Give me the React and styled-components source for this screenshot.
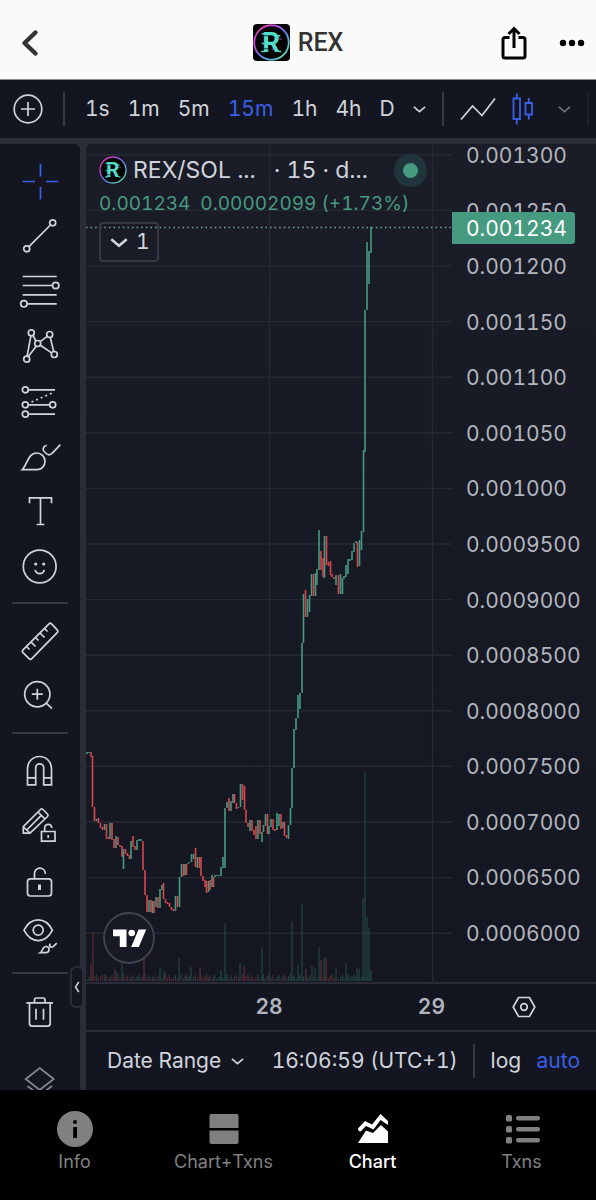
import React, { useState } from "react";
import styled, { createGlobalStyle } from "styled-components";

const GlobalStyle = createGlobalStyle`
    body {
        margin: 0;
        background: #000000;
        font-family: Inter, "Liberation Sans", sans-serif;
    }

    * {
        box-sizing: border-box;
    }

    button {
        margin: 0;
        padding: 0;
        border: none;
        background: none;
        color: inherit;
        font: inherit;
        font-variant-numeric: inherit;
        cursor: pointer;
    }

    svg {
        display: block;
        flex-shrink: 0;
    }
`;

const Page = styled.div`
    display: flex;
    flex-direction: column;
    height: 100vh;
    background: #2a2c37;
    color: #d1d4dc;
    font-size: 21px;
    font-variant-numeric: tabular-nums;
    line-height: 24px;
`;

const Header = styled.header`
    display: grid;
    grid-template-columns: 1fr auto 1fr;
    align-items: center;
    height: 80px;
    padding: 6px 11px 0;
    background: #fafafa;
    border-bottom: 1px solid #8a8b90;
    color: #333333;
    flex-shrink: 0;
`;

const BackButton = styled.button`
    justify-self: start;
    padding-left: 9px;
`;

const HeaderTitle = styled.h1`
    display: flex;
    align-items: center;
    gap: 8px;
    margin: 0;
    font-family: Roboto, sans-serif;
    font-size: 25px;
    font-weight: 500;
`;

const HeaderActions = styled.div`
    display: flex;
    justify-content: flex-end;
    gap: 31px;
    color: #000000;
`;

const Toolbar = styled.div`
    display: flex;
    align-items: center;
    gap: 16px;
    height: 58px;
    padding-left: 13px;
    background: #131620;
    overflow: hidden;
    flex-shrink: 0;
`;

const ToolbarGroup = styled.div`
    display: flex;
    align-items: center;
    gap: ${props => props.$gap}px;
    padding-right: ${props => props.$end || 0}px;
`;

const Divider = styled.div`
    width: 2px;
    height: 34px;
    background: ${props => (props.$dim ? "#1d202b" : "#363943")};
    flex-shrink: 0;
`;

const TextButton = styled.button`
    color: ${props => (props.$active ? "#3b5fe6" : "#d1d4dc")};
    white-space: nowrap;
`;

const Workspace = styled.div`
    position: relative;
    display: flex;
    flex: 1;
    gap: 6px;
    min-height: 0;
    padding-top: 6px;
`;

const Sidebar = styled.aside`
    display: flex;
    flex-direction: column;
    align-items: center;
    width: 80px;
    padding-top: 9px;
    background: #131620;
    border-top-right-radius: 6px;
    overflow: hidden;
    flex-shrink: 0;
`;

const ToolButton = styled.button`
    display: flex;
    justify-content: center;
    align-items: center;
    width: 80px;
    height: 55px;
    color: ${props => (props.$active ? "#3b5fe6" : "#d1d4dc")};
    opacity: ${props => (props.$faded ? 0.6 : 1)};
    flex-shrink: 0;
`;

const ToolDivider = styled.div`
    width: 56px;
    height: 2px;
    margin: 9px 0;
    background: #363943;
    flex-shrink: 0;
`;

const ToolGap = styled.div`
    height: 13px;
    flex-shrink: 0;
`;

const CollapseHandle = styled.button`
    position: absolute;
    left: 70px;
    bottom: 82px;
    display: flex;
    justify-content: center;
    align-items: center;
    width: 14px;
    height: 42px;
    background: #131620;
    border: 2px solid #2a2c37;
    border-radius: 6px;
`;

const ChartPanel = styled.main`
    display: flex;
    flex-direction: column;
    flex: 1;
    min-width: 0;
    background: #131620;
    border-top-left-radius: 6px;
    overflow: hidden;
`;

const ChartArea = styled.div`
    display: flex;
    flex: 1;
    min-height: 0;
    background: linear-gradient(#1a1c27, #141721);
`;

const Plot = styled.div`
    position: relative;
    flex: 1;
    min-width: 0;
`;

const PlotSvg = styled.svg`
    width: 100%;
    height: 100%;
`;

const Legend = styled.div`
    position: absolute;
    top: 9px;
    left: 13px;
    right: 25px;
`;

const LegendTitle = styled.div`
    display: flex;
    align-items: center;
    gap: 6px;
    height: 34px;
    font-size: 23px;
    white-space: nowrap;
`;

const LegendInterval = styled.span`
    margin-left: 12px;
`;

const LiveDot = styled.span`
    width: 33px;
    height: 33px;
    margin-left: auto;
    border: 9px solid #20353b;
    border-radius: 50%;
    background: #459a80;
`;

const LegendValues = styled.div`
    display: flex;
    gap: 10px;
    margin-top: 5px;
    color: #459a80;
    font-size: 19px;
    white-space: nowrap;
`;

const LegendToggle = styled.button`
    display: flex;
    align-items: center;
    gap: 8px;
    height: 40px;
    margin-top: 6px;
    padding: 0 7px 0 9px;
    border: 2px solid #363943;
    border-radius: 4px;
`;

const ChartBadge = styled.a`
    position: absolute;
    left: 17px;
    bottom: 18px;
`;

const PriceScale = styled.div`
    position: relative;
    display: flex;
    flex-direction: column;
    justify-content: space-between;
    width: 144px;
    padding: 2px 0 38px 14px;
    color: #b2b5be;
    line-height: 20px;
    flex-shrink: 0;
`;

const PriceTag = styled.div`
    position: absolute;
    top: 68px;
    left: 0;
    width: 123px;
    padding: 1px 0 0 14px;
    background: #459a80;
    border-radius: 0 3px 3px 0;
    color: #ffffff;
    line-height: 31px;
`;

const TimeAxis = styled.div`
    display: flex;
    height: 50px;
    border-top: 2px solid #2a2c37;
    border-bottom: 2px solid #2a2c37;
    flex-shrink: 0;
`;

const DayLabels = styled.div`
    display: grid;
    grid-template-columns: 1fr auto 1fr;
    align-items: center;
    flex: 1;
    padding: 0 7px;
    color: #b2b5be;
    font-weight: 600;
`;

const DayLabel = styled.span`
    grid-column: ${props => props.$column};
    justify-self: end;
`;

const AxisSettings = styled.button`
    display: flex;
    justify-content: center;
    align-items: center;
    width: 144px;
`;

const BottomBar = styled.div`
    display: flex;
    align-items: center;
    justify-content: space-between;
    height: 58px;
    padding: 0 16px 0 21px;
    flex-shrink: 0;
`;

const RangeButton = styled(TextButton)`
    display: flex;
    align-items: center;
    gap: 10px;
    margin-right: 12px;
`;

const Nav = styled.nav`
    display: grid;
    grid-template-columns: repeat(4, 1fr);
    height: 110px;
    padding-top: 19px;
    background: #000000;
    flex-shrink: 0;
`;

const NavLink = styled.a`
    display: flex;
    flex-direction: column;
    align-items: center;
    gap: 1px;
    color: ${props => (props.$active ? "#ffffff" : "#808080")};
    font-size: 18px;
    font-weight: ${props => (props.$active ? 500 : 400)};
    text-decoration: none;
`;

const LogoLetter = styled.text`
    font-family: Roboto, sans-serif;
    font-size: 27px;
    font-weight: 700;
`;

const TokenLogo = ({ id, size, square }) => (
    <svg width={size} height={size} viewBox="0 0 36 36" aria-hidden="true">
        <defs>
            <linearGradient id={id} x1="0" y1="0" x2="1" y2="1">
                <stop offset="0" stopColor="#f03ca8" />
                <stop offset="0.35" stopColor="#b04ad8" />
                <stop offset="0.55" stopColor="#5a8cf0" />
                <stop offset="1" stopColor="#5cf0a0" />
            </linearGradient>
        </defs>
        {square ? (
            <rect width="36" height="36" rx="4" fill="#000000" />
        ) : (
            <circle cx="18" cy="18" r="18" fill="#000000" />
        )}
        <circle cx="18" cy="18" r="16.8" fill="none" stroke={`url(#${id})`} strokeWidth="1.8" />
        <LogoLetter x="9" y="27.6" fill="#4fdccb">R</LogoLetter>
        <path d="M8.500 9.500h4M24 11.500h2.500M8.500 19h2.500M8 26.800h4M25 26.800h2.500" stroke="#4fdccb" strokeWidth="1.4" />
        <path d="M25.500 14.500h2.500M18 24.500h2" stroke="#b04ad8" strokeWidth="1" />
        <path d="M9 11.400h6M9 24h7" stroke="#04181c" strokeWidth="0.7" />
    </svg>
);

const Chevron = ({ width = 13, color = "#d1d4dc", weight = 1.8 }) => (
    <svg width={width} height={width / 2} viewBox="0 0 14 7" fill="none" stroke={color} strokeWidth={weight} overflow="visible">
        <path d="M1 1l6 5 6-5" />
    </svg>
);

// every drawing tool icon sits on a 44px canvas
const toolIcons = {
    cross: <path d="M22.500 5v12.500M22.500 28v12.500M4.500 22.500H17M28 22.500h12.500" />,
    trend: (
        <>
            <circle cx="34.700" cy="8.800" r="3" />
            <circle cx="8.700" cy="34.800" r="3" />
            <path d="M32.500 11L10.900 32.600" />
        </>
    ),
    fib: (
        <>
            <path d="M4.700 7.500h34M4.700 16.500h29.700M4.700 25.800h34M9 34.800h29.700" />
            <circle cx="37.700" cy="16.500" r="3.200" />
            <circle cx="5.900" cy="34.800" r="3.200" />
        </>
    ),
    pattern: (
        <>
            <circle cx="13.300" cy="8.800" r="3" />
            <circle cx="31.700" cy="10.500" r="3" />
            <circle cx="19.700" cy="19.500" r="3" />
            <circle cx="8.700" cy="35.200" r="3" />
            <circle cx="36.300" cy="30.500" r="3" />
            <path d="M12.900 11.800L9.100 32.200M14.900 11.500l3.200 5.500M18.300 22.200L10.300 32.600M22.200 17.700l7-5.400M32.300 13.500l3.400 14.100M22.400 21.200l11.200 7.700" />
        </>
    ),
    forecast: (
        <>
            <circle cx="7.300" cy="10.800" r="3" />
            <circle cx="7.300" cy="25.800" r="3" />
            <circle cx="34.700" cy="25.800" r="3" />
            <circle cx="7.300" cy="35.200" r="3" />
            <path d="M10.300 10.800H37M10.300 25.800h21.400M10.300 35.200H37" />
            <path d="M13.500 23L35.500 13.500" strokeDasharray="2 3" />
        </>
    ),
    brush: (
        <>
            <path d="M4.300 35.600C9 31 10 19 18.700 19a8.300 8.300 0 0 1 8.300 8.300c0 5-3.500 8.300-8.300 8.300z" />
            <path d="M28.800 11.300c-2.400.6-3.600 2.200-3.600 4.400 0 1.200 4 5.200 5.600 5.200 1.500 0 2.700-.8 4-2.200l7.600-8" />
        </>
    ),
    type: <path d="M11.500 14.200V8.800h22v5.400M22.500 8.800v26.700M18.700 35.500h7.600" />,
    smile: (
        <>
            <circle cx="21.700" cy="22.500" r="16.400" />
            <circle cx="17.700" cy="20" r="1.600" fill="currentColor" stroke="none" />
            <circle cx="25.700" cy="20" r="1.600" fill="currentColor" stroke="none" />
            <path d="M17.200 25.800c1 5 8 5 9 0" />
        </>
    ),
    ruler: (
        <>
            <path d="M31 4.800L5 30.800q-1.400 1.400 0 2.800l6 6q1.400 1.400 2.800 0l25.400-26q1.400-1.400 0-2.800l-5.700-6q-1.300-1.300-2.500 0z" />
            <path d="M8.500 27.500l3 3M13 23l4.500 4.500M17.500 18.500l3 3M22 14l4.500 4.500M26.500 9.500l3 3" />
        </>
    ),
    zoom: (
        <>
            <circle cx="19.300" cy="20.200" r="12.600" />
            <path d="M28.300 29.200l5.700 5.500M13.800 20.200h11M19.300 14.700v11" />
        </>
    ),
    magnet: (
        <path d="M9.500 35.800V19.500a12 12 0 0 1 24 0v16.300h-7.800V18.800a4 4 0 0 0-8 0v17zM9.500 28.800h8.200M25.700 28.800h7.800" />
    ),
    pencilLock: (
        <>
            <path d="M5.300 29.200v-6.500L22.500 5.500q1.200-1.200 2.500 0l4.500 4.500q1.200 1.200 0 2.500L12 29.200zM5.500 23l6.300 6M20 8l6.800 6.800M8.800 26L23.500 11.200" />
            <path d="M23.500 27.500h13.500v9.700H23.500zM26.700 27.500v-3.700c0-4.500 7-4.500 7 .200M30.200 31v3" />
        </>
    ),
    lock: (
        <>
            <rect x="9.500" y="19.800" width="24" height="17.200" rx="3" />
            <path d="M16.500 19.800v-5.300c0-7 10.700-7.300 10.900.5" />
            <path d="M21.500 25.500v5.500" strokeWidth="3" />
        </>
    ),
    eyeBrush: (
        <>
            <path d="M6 16.200C13 2.500 27.500 2.500 34.400 16.200 27.500 30 13 30 6 16.200z" />
            <circle cx="20.200" cy="16.200" r="5" />
            <path d="M22.300 38.700c2.500-1.500 2-6.200 5.600-6.200 4.300 0 4.200 6.200-.2 6.200zM32.200 29.600c-1.800 3.200 1.200 4.300 3 3l3.600-3.400" />
        </>
    ),
    trash: (
        <path d="M8.300 13.800H35M16.500 13.800V11q0-2 2-2H25q2 0 2 2v2.800M11.500 13.800v20.400q0 3 3 3h14.700q3 0 3-3V13.800M18 19.800v11M25.500 19.800v11" />
    ),
    layers: <path d="M21.700 11l14 11-14 11-14-11zM9.500 29l12.200 9.500L34 29" />
};

const ToolIcon = ({ name }) => (
    <svg width="44" height="44" viewBox="0 0 44 44" fill="none" stroke="currentColor" strokeWidth="1.7">
        {toolIcons[name]}
    </svg>
);

const toolGroups = [
    [
        ["cross", "Cursor"],
        ["trend", "Trend line"],
        ["fib", "Fib retracement"],
        ["pattern", "Patterns"],
        ["forecast", "Forecasting"],
        ["brush", "Brush"],
        ["type", "Text"],
        ["smile", "Icons"]
    ],
    [
        ["ruler", "Measure"],
        ["zoom", "Zoom in"]
    ],
    [
        ["magnet", "Magnet mode"],
        ["pencilLock", "Stay in drawing mode"],
        ["lock", "Lock all drawings"],
        ["eyeBrush", "Hide all drawings"]
    ],
    [["trash", "Remove drawings"]]
];

const intervals = ["1s", "1m", "5m", "15m", "1h", "4h", "D"];

const prices = [
    "0.001300",
    "0.001250",
    "0.001200",
    "0.001150",
    "0.001100",
    "0.001050",
    "0.001000",
    "0.0009500",
    "0.0009000",
    "0.0008500",
    "0.0008000",
    "0.0007500",
    "0.0007000",
    "0.0006500",
    "0.0006000"
];

// [x, high, low, direction]
const candles = [
    [87, 752, 754, 1], [89, 752, 753, 1], [91, 752, 757, 0], [92.5, 756, 807, 0], [94.5, 807, 821, 0],
    [96.5, 819, 821, 1], [98.5, 818, 823, 0], [100.5, 823, 828, 0], [102.5, 827, 830, 0], [104.5, 824, 830, 1],
    [106.5, 824, 839, 0], [108.5, 837, 839, 0], [110, 823, 839, 1], [112, 823, 840, 0], [114, 839, 848, 0],
    [116, 836, 848, 1], [118, 837, 845, 0], [120, 845, 847, 0], [122, 846, 857, 0], [123.5, 849, 869, 1],
    [125.5, 849, 854, 0], [127.5, 853, 856, 0], [129.5, 855, 859, 0], [131, 841, 859, 1], [133, 836, 847, 0],
    [135, 846, 850, 0], [137, 840, 850, 1], [139, 839, 841, 1], [141, 839, 841, 1], [143, 841, 870, 0],
    [145, 870, 895, 0], [147, 895, 912, 0], [149, 900, 912, 1], [151, 900, 912, 0], [152.5, 901, 913, 1],
    [154, 901, 913, 0], [156, 897, 907, 1], [158, 897, 908, 0], [160, 889, 908, 1], [162, 885, 890, 1],
    [163.5, 883, 899, 0], [165.5, 899, 903, 0], [167.5, 902, 904, 0], [169.5, 903, 907, 0], [171.5, 907, 910, 0],
    [173.5, 909, 911, 0], [175.5, 896, 911, 1], [177.5, 896, 907, 0], [179.5, 877, 907, 1], [181.5, 864, 877, 1],
    [183.5, 864, 876, 0], [185, 864, 875, 1], [186.5, 864, 875, 0], [188, 863, 864, 1], [189.5, 862, 863, 1],
    [191.5, 854, 862, 1], [193.5, 854, 859, 1], [195.5, 848, 867, 0], [197.5, 857, 868, 1], [199.5, 857, 868, 0],
    [201, 857, 876, 0], [203, 876, 881, 0], [205, 880, 887, 0], [206.5, 881, 893, 0], [208.5, 881, 892, 1],
    [210, 880, 890, 0], [212, 875, 887, 1], [213.5, 877, 887, 0], [215, 875, 877, 1], [217, 875, 876, 1],
    [219, 875, 876, 1], [221, 867, 876, 1], [223, 857, 868, 1], [225, 808, 868, 1], [227, 802, 808, 1],
    [229, 798, 811, 0], [231, 801, 811, 1], [233, 794, 803, 1], [234.5, 794, 803, 0], [236.5, 803, 809, 0],
    [238.5, 807, 808, 1], [240.5, 784, 807, 1], [242.5, 784, 800, 0], [244.5, 786, 810, 0], [246, 810, 823, 0],
    [248, 823, 827, 0], [250, 820, 831, 1], [252, 820, 831, 0], [254, 830, 835, 0], [256, 826, 839, 0],
    [258, 820, 839, 1], [260, 820, 834, 0], [262, 832, 842, 1], [263.5, 825, 832, 1], [265.5, 814, 826, 1],
    [267.5, 814, 834, 0], [269, 826, 834, 1], [271, 819, 827, 1], [273, 819, 830, 0], [275, 829, 831, 0],
    [277, 813, 830, 1], [279, 814, 826, 1], [281, 814, 829, 0], [283, 822, 828, 1], [284.5, 822, 836, 0],
    [286.5, 835, 838, 0], [288.5, 825, 839, 1], [290.5, 808, 825, 1], [292, 768, 808, 1], [294, 729, 768, 1],
    [296, 718, 730, 1], [298, 695, 718, 1], [300, 693, 709, 1], [302, 643, 693, 1], [303.5, 594, 643, 1],
    [305.5, 590, 617, 0], [307.5, 599, 617, 1], [309.5, 595, 612, 1], [311.5, 574, 596, 1], [313.5, 574, 596, 0],
    [315.5, 573, 596, 1], [317, 569, 585, 1], [319, 530, 570, 1], [321, 551, 570, 0], [323, 558, 577, 0],
    [324.5, 536, 578, 1], [326.5, 536, 565, 0], [328.5, 562, 566, 0], [330.5, 561, 575, 0], [332, 574, 577, 0],
    [334, 577, 579, 0], [336, 575, 585, 1], [338.5, 575, 594, 0], [340.5, 574, 594, 1], [342.5, 578, 594, 1],
    [344, 576, 579, 1], [346, 565, 577, 1], [348, 559, 574, 1], [350, 559, 561, 1], [352, 551, 560, 1],
    [354, 543, 552, 1], [356, 541, 543, 1], [357.5, 542, 567, 0], [359.5, 540, 566, 1], [361.5, 531, 550, 1],
    [363.5, 450, 532, 1], [365, 310, 452, 1], [367, 242, 310, 1], [369, 251, 284, 1], [371, 227, 253, 1]
];

// volume peaks by x, everything between them is low
const volumes = [
    [91, 18, 0], [93, 49, 0], [105, 7, 1], [115, 12, 0], [117, 9, 1], [122, 22, 1], [144, 24, 0], [160, 13, 1],
    [164, 10, 1], [179, 23, 1], [191, 14, 1], [200, 14, 0], [221, 11, 1], [225, 58, 1], [240, 18, 1],
    [244, 15, 0], [262, 33, 1], [292, 60, 1], [298, 16, 1], [302, 77, 1], [306, 12, 0], [312, 15, 1],
    [315, 13, 1], [319, 34, 1], [321, 21, 0], [324, 23, 1], [326, 24, 0], [336, 13, 1], [346, 18, 1],
    [357, 13, 1], [359, 12, 1], [363, 83, 1], [365, 209, 1], [367, 64, 1], [369, 53, 1], [371, 11, 1]
];

const Candles = () => (
    <PlotSvg viewBox="86 144 366 838" preserveAspectRatio="none">
        <g stroke="#262933" strokeWidth="1.4">
            {prices.map((price, i) => (
                <path key={price} d={`M86 ${154.8 + i * 55.6}H452`} />
            ))}
            <path d="M269.500 144V982M432.500 144V982" />
        </g>
        {candles.map(([x, , , up], i) => (
            <rect
                key={x}
                x={x - 0.7}
                y={981 - (2 + ((i * 37) % 11) / 2)}
                width="1.3"
                height={2 + ((i * 37) % 11) / 2}
                fill={up ? "#23403f" : "#4b2830"}
            />
        ))}
        {volumes.map(([x, height, up]) => (
            <rect key={x} x={x - 0.8} y={981 - height} width="1.6" height={height} fill={up ? "#203a3c" : "#4b2830"} />
        ))}
        {candles.map(([x, high, low, up]) => (
            <rect key={x} x={x - 0.8} y={high} width="1.6" height={low - high} fill={up ? "#459a80" : "#d8474e"} />
        ))}
        <path d="M86 227.500H452" stroke="#75a89a" strokeWidth="1.3" strokeDasharray="1.5 3.1" />
    </PlotSvg>
);

const App = () => {
    const [interval, setActiveInterval] = useState("15m");
    const [tool, setTool] = useState("cross");
    const [tab, setTab] = useState("chart");

    const openTab = name => e => {
        e.preventDefault();
        setTab(name);
    };

    return (
        <>
            <GlobalStyle />
            <Page>
                <Header>
                    <BackButton aria-label="Back">
                        <svg width="20" height="30" viewBox="0 0 20 30" fill="none" stroke="#333333" strokeWidth="4.4" strokeLinecap="round" strokeLinejoin="round">
                            <path d="M15.500 4.500L4.500 15l11 10.500" />
                        </svg>
                    </BackButton>
                    <HeaderTitle>
                        <TokenLogo id="ring-header" size={37} square />
                        REX
                    </HeaderTitle>
                    <HeaderActions>
                        <button aria-label="Share">
                            <svg width="28" height="36" viewBox="0 0 28 36" fill="none" stroke="#000000" strokeWidth="3">
                                <path d="M9.500 12.500H5q-2 0-2 2V31q0 2 2 2h18q2 0 2-2V14.500q0-2-2-2h-4.500" />
                                <path d="M14 23V4M8.500 9L14 3.500 19.500 9" />
                            </svg>
                        </button>
                        <button aria-label="More">
                            <svg width="26" height="36" viewBox="0 0 26 36">
                                <circle cx="4" cy="18" r="3.200" />
                                <circle cx="13" cy="18" r="3.200" />
                                <circle cx="22" cy="18" r="3.200" />
                            </svg>
                        </button>
                    </HeaderActions>
                </Header>

                <Toolbar>
                    <ToolbarGroup $gap={20} $end={4}>
                        <button aria-label="Add symbol">
                            <svg width="30" height="30" viewBox="0 0 30 30" fill="none" stroke="#d1d4dc" strokeWidth="1.700">
                                <circle cx="15" cy="15" r="13.800" />
                                <path d="M15 8v14M8 15h14" />
                            </svg>
                        </button>
                        <Divider />
                    </ToolbarGroup>
                    <ToolbarGroup $gap={18}>
                        {intervals.map(item => (
                            <TextButton
                                key={item}
                                $active={item === interval}
                                onClick={() => setActiveInterval(item)}
                            >
                                {item}
                            </TextButton>
                        ))}
                        <button aria-label="More intervals">
                            <Chevron />
                        </button>
                    </ToolbarGroup>
                    <ToolbarGroup $gap={16} $end={8}>
                        <Divider />
                        <button aria-label="Line">
                            <svg width="36" height="26" viewBox="0 0 36 26" fill="none" stroke="#d1d4dc" strokeWidth="1.700">
                                <path d="M1 23.500L12.500 10l9.500 9.500L35 2.500" />
                            </svg>
                        </button>
                        <button aria-label="Candles">
                            <svg width="22" height="32" viewBox="0 0 22 32" fill="none" stroke="#3b5fe6" strokeWidth="1.800">
                                <path d="M1.500 5.500h6.500v20.500H1.500zM4.800 0.500v5M4.800 26v5.500M13.500 10h6.500v11.500h-6.500zM16.800 5v5M16.800 21.500v5" />
                            </svg>
                        </button>
                    </ToolbarGroup>
                    <ToolbarGroup $gap={16}>
                        <button aria-label="Chart type">
                            <Chevron color="#6e727d" />
                        </button>
                        <Divider $dim />
                    </ToolbarGroup>
                </Toolbar>

                <Workspace>
                    <Sidebar>
                        {toolGroups.map((group, i) => (
                            <React.Fragment key={i}>
                                {i > 0 && <ToolDivider />}
                                {group.map(([name, label]) => (
                                    <ToolButton
                                        key={name}
                                        aria-label={label}
                                        $active={tool === name}
                                        onClick={() => setTool(name)}
                                    >
                                        <ToolIcon name={name} />
                                    </ToolButton>
                                ))}
                            </React.Fragment>
                        ))}
                        <ToolGap />
                        <ToolButton aria-label="Object tree" $faded>
                            <ToolIcon name="layers" />
                        </ToolButton>
                    </Sidebar>

                    <ChartPanel>
                        <ChartArea>
                            <Plot>
                                <Candles />
                                <Legend>
                                    <LegendTitle>
                                        <TokenLogo id="ring-legend" size={28} />
                                        <span>REX/SOL ...</span>
                                        <LegendInterval>· 15 · d...</LegendInterval>
                                        <LiveDot />
                                    </LegendTitle>
                                    <LegendValues>
                                        <span>0.001234</span>
                                        <span>0.00002099 (+1.73%)</span>
                                    </LegendValues>
                                    <LegendToggle>
                                        <Chevron width={18} weight={2} />
                                        1
                                    </LegendToggle>
                                </Legend>
                                <ChartBadge href="#tradingview" aria-label="TradingView">
                                    <svg width="52" height="52" viewBox="0 0 52 52">
                                        <circle cx="26" cy="26" r="25" fill="#171a24" stroke="#434651" strokeWidth="1.800" />
                                        <path d="M10 17.500h13.500V35h-6.700V24.300H10zM35.500 17.500H43.200L35.800 35h-7.600z" fill="#ffffff" />
                                        <circle cx="28.700" cy="21" r="3.300" fill="#ffffff" />
                                    </svg>
                                </ChartBadge>
                            </Plot>
                            <PriceScale>
                                {prices.map(price => (
                                    <span key={price}>{price}</span>
                                ))}
                                <PriceTag>0.001234</PriceTag>
                            </PriceScale>
                        </ChartArea>

                        <TimeAxis>
                            <DayLabels>
                                <DayLabel $column={2}>28</DayLabel>
                                <DayLabel $column={3}>29</DayLabel>
                            </DayLabels>
                            <AxisSettings aria-label="Axis settings">
                                <svg width="24" height="22" viewBox="0 0 24 22" fill="none" stroke="#d1d4dc" strokeWidth="1.700">
                                    <path d="M6.500 1.500h11L22.800 11l-5.300 9.500h-11L1.200 11z" />
                                    <circle cx="12" cy="11" r="3.300" />
                                </svg>
                            </AxisSettings>
                        </TimeAxis>

                        <BottomBar>
                            <RangeButton>
                                Date Range
                                <Chevron />
                            </RangeButton>
                            <TextButton>16:06:59 (UTC+1)</TextButton>
                            <Divider />
                            <TextButton>log</TextButton>
                            <TextButton $active>auto</TextButton>
                        </BottomBar>
                    </ChartPanel>

                    <CollapseHandle aria-label="Hide drawings toolbar">
                        <svg width="6" height="12" viewBox="0 0 6 12" fill="none" stroke="#d1d4dc" strokeWidth="1.500">
                            <path d="M4.800 1L1.500 6l3.300 5" />
                        </svg>
                    </CollapseHandle>
                </Workspace>

                <Nav>
                    <NavLink href="#info" $active={tab === "info"} onClick={openTab("info")}>
                        <svg width="40" height="40" viewBox="0 0 40 40">
                            <circle cx="20" cy="20" r="18" fill="currentColor" />
                            <circle cx="20" cy="13" r="2" fill="#000000" />
                            <path d="M18.200 18h3.800v11h-3.800z" fill="#000000" />
                        </svg>
                        Info
                    </NavLink>
                    <NavLink href="#chart-txns" $active={tab === "both"} onClick={openTab("both")}>
                        <svg width="40" height="40" viewBox="0 0 40 40" fill="currentColor">
                            <path d="M7.500 5h25a2 2 0 0 1 2 2v12h-29V7a2 2 0 0 1 2-2zM5.500 21.500h29V33a2 2 0 0 1-2 2h-25a2 2 0 0 1-2-2z" />
                        </svg>
                        Chart+Txns
                    </NavLink>
                    <NavLink href="#chart" $active={tab === "chart"} onClick={openTab("chart")}>
                        <svg width="40" height="40" viewBox="0 0 40 40" fill="currentColor">
                            <path d="M5 34l8-12.500 7 2.500 8-8 7 6.500V34z" />
                            <path d="M5 19.500l7-7.500 7 3.500 8.500-10.500L35 12v4L27.500 11 20.500 20.500l-7.500-3.500L7.500 22.500q-2.500 0-2.500-3z" />
                        </svg>
                        Chart
                    </NavLink>
                    <NavLink href="#txns" $active={tab === "txns"} onClick={openTab("txns")}>
                        <svg width="40" height="40" viewBox="0 0 40 40" fill="currentColor">
                            <rect x="4" y="6" width="6" height="6.500" rx="1.500" />
                            <rect x="4" y="17" width="6" height="6.500" rx="1.500" />
                            <rect x="4" y="28" width="6" height="6.500" rx="1.500" />
                            <rect x="14" y="7" width="24" height="4.500" rx="2.200" />
                            <rect x="14" y="18" width="24" height="4.500" rx="2.200" />
                            <rect x="14" y="29" width="24" height="4.500" rx="2.200" />
                        </svg>
                        Txns
                    </NavLink>
                </Nav>
            </Page>
        </>
    );
};

export default App;
